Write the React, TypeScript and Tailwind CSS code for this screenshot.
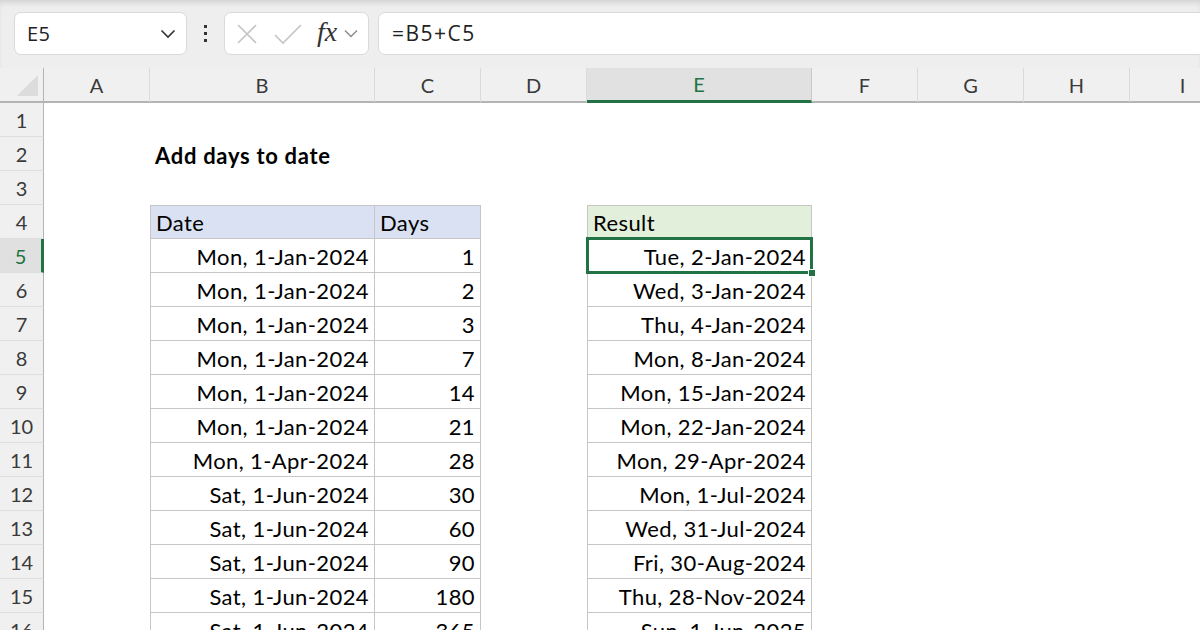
import React from "react";

const COLS = [
  { k: "A", w: 106 },
  { k: "B", w: 225 },
  { k: "C", w: 106 },
  { k: "D", w: 106 },
  { k: "E", w: 225 },
  { k: "F", w: 106 },
  { k: "G", w: 106 },
  { k: "H", w: 106 },
  { k: "I", w: 106 },
];

const DATA: [string, string, string][] = [
  ["Mon, 1-Jan-2024", "1", "Tue, 2-Jan-2024"],
  ["Mon, 1-Jan-2024", "2", "Wed, 3-Jan-2024"],
  ["Mon, 1-Jan-2024", "3", "Thu, 4-Jan-2024"],
  ["Mon, 1-Jan-2024", "7", "Mon, 8-Jan-2024"],
  ["Mon, 1-Jan-2024", "14", "Mon, 15-Jan-2024"],
  ["Mon, 1-Jan-2024", "21", "Mon, 22-Jan-2024"],
  ["Mon, 1-Apr-2024", "28", "Mon, 29-Apr-2024"],
  ["Sat, 1-Jun-2024", "30", "Mon, 1-Jul-2024"],
  ["Sat, 1-Jun-2024", "60", "Wed, 31-Jul-2024"],
  ["Sat, 1-Jun-2024", "90", "Fri, 30-Aug-2024"],
  ["Sat, 1-Jun-2024", "180", "Thu, 28-Nov-2024"],
  ["Sat, 1-Jun-2024", "365", "Sun, 1-Jun-2025"],
];

const cellFont = "font-['Lato','Liberation_Sans',sans-serif] text-[22px] leading-[28px] tracking-[0.4px] text-black";

function RowHeader({ n }: { n: number }) {
  const sel = n === 5;
  return (
    <div
      className={`h-[34px] flex items-center justify-center border-b border-[#dedede] font-['Lato','Liberation_Sans',sans-serif] text-[20px] ${
        sel
          ? "bg-[#e0e0e0] text-[#217346] border-r-[3px] border-r-[#217346]"
          : "bg-[#f0f0f0] text-[#3a3a3a] border-r border-r-[#b4b4b4]"
      }`}
    >
      {n}
    </div>
  );
}

function Cell({
  children,
  className = "",
}: {
  children?: React.ReactNode;
  className?: string;
}) {
  return (
    <div className={`h-[34px] flex items-end pb-[1px] px-[5px] whitespace-nowrap overflow-hidden ${cellFont} ${className}`}>
      {children}
    </div>
  );
}

export default function App() {
  const rows: React.ReactNode[] = [];
  for (let r = 1; r <= 16; r++) {
    const cells: React.ReactNode[] = [];
    cells.push(<RowHeader key="h" n={r} />);
    for (let c = 0; c < COLS.length; c++) {
      const col = COLS[c].k;
      let content: React.ReactNode = null;
      let cls = "";
      let extra: React.ReactNode = null;
      if (r === 2 && col === "B") {
        content = <span className="font-bold text-[22px] tracking-[0.7px]">Add days to date</span>;
        cls = "overflow-visible";
      }
      const inTable1 = r >= 4 && (col === "B" || col === "C");
      const inTable2 = r >= 4 && col === "E";
      if (inTable1 || inTable2) {
        cls += " border-r border-b border-[#c6c6c6]";
        if (col === "B" || col === "E") cls += " border-l";
        if (r === 4) cls += " border-t";
      }
      if (r === 4) {
        if (col === "B") { content = "Date"; cls += " bg-[#d9e1f2]"; }
        if (col === "C") { content = "Days"; cls += " bg-[#d9e1f2]"; }
        if (col === "E") { content = "Result"; cls += " bg-[#e2efda]"; }
      } else if (r >= 5) {
        const d = DATA[r - 5];
        if (col === "B") { content = d[0]; cls += " justify-end"; }
        if (col === "C") { content = d[1]; cls += " justify-end"; }
        if (col === "E") { content = d[2]; cls += " justify-end"; }
      }
      if (r === 5 && col === "E") {
        cls += " relative overflow-visible";
        extra = (
          <>
            <div className="absolute -left-[2px] -top-[2px] -right-[2px] -bottom-[2px] border-[3px] border-[#217346] pointer-events-none" />
            <div className="absolute -right-[5px] -bottom-[5px] w-[8px] h-[8px] bg-[#217346] border border-white" />
          </>
        );
      }
      cells.push(
        <Cell key={c} className={cls}>
          {content}
          {extra}
        </Cell>
      );
    }
    rows.push(<React.Fragment key={r}>{cells}</React.Fragment>);
  }

  return (
    <div className="w-[1200px] h-[630px] overflow-hidden bg-white flex flex-col">
      {/* Formula bar */}
      <div className="h-[68px] shrink-0 bg-[#eeeeee] shadow-[inset_0_5px_6px_-3px_rgba(0,0,0,0.14)] flex items-start pt-[12px] pl-[14px]">
        <div className="w-[173px] h-[43px] bg-white rounded-[7px] border border-[#dadada] flex items-center pl-[12px] pr-[10px] justify-between">
          <span className="font-['Open_Sans','Lato',sans-serif] text-[20px] tracking-[0.5px] text-[#222]">E5</span>
          <svg width="16" height="10" viewBox="0 0 16 10">
            <path d="M1.5 1.5 L8 8 L14.5 1.5" fill="none" stroke="#333" strokeWidth="1.6" />
          </svg>
        </div>
        <div className="w-[37px] h-[43px] flex flex-col items-center justify-center gap-[4px]">
          <div className="w-[3px] h-[3px] bg-[#333]" />
          <div className="w-[3px] h-[3px] bg-[#333]" />
          <div className="w-[3px] h-[3px] bg-[#333]" />
        </div>
        <div className="w-[145px] h-[43px] bg-white rounded-[7px] border border-[#dadada] flex items-center pl-[10px]">
          <svg width="22" height="22" viewBox="0 0 22 22" className="ml-[1px]">
            <path d="M2 2 L20 20 M20 2 L2 20" fill="none" stroke="#c4c4c4" strokeWidth="1.6" />
          </svg>
          <svg width="30" height="22" viewBox="0 0 30 22" className="ml-[15px]">
            <path d="M2 12 L10 20 L28 2" fill="none" stroke="#c4c4c4" strokeWidth="1.6" />
          </svg>
          <span className="ml-[14px] font-['Liberation_Serif',serif] italic text-[28px] text-[#333] leading-none -mt-[4px]">
            fx
          </span>
          <svg width="14" height="9" viewBox="0 0 14 9" className="ml-[7px]">
            <path d="M1 1.5 L7 7.5 L13 1.5" fill="none" stroke="#8a8a8a" strokeWidth="1.4" />
          </svg>
        </div>
        <div className="ml-[9px] flex-1 -mr-[20px] h-[43px] bg-white rounded-[7px] border border-[#dadada] flex items-center pl-[13px]">
          <span className="font-['Open_Sans','Lato',sans-serif] text-[21px] tracking-[1.5px] text-[#222]">=B5+C5</span>
        </div>
      </div>

      {/* Column headers */}
      <div className="flex h-[35px] shrink-0 bg-[#f0f0f0]">
        <div className="w-[44px] shrink-0 h-[35px] border-b-2 border-[#b4b4b4] border-r border-r-[#b4b4b4] relative">
          <svg width="22" height="22" viewBox="0 0 22 22" className="absolute left-[17px] top-[7px]">
            <path d="M21 0 L21 21 L0 21 Z" fill="#dcdcdc" />
          </svg>
        </div>
        {COLS.map((c) =>
          c.k === "E" ? (
            <div
              key={c.k}
              style={{ width: c.w }}
              className="shrink-0 h-[35px] bg-[#e1e1e1] border-r border-[#c8c8c8] border-b-[3px] border-b-[#217346] flex items-center justify-center font-['Lato','Liberation_Sans',sans-serif] text-[20px] text-[#217346]"
            >
              {c.k}
            </div>
          ) : (
            <div
              key={c.k}
              style={{ width: c.w }}
              className="shrink-0 h-[35px] border-r border-[#dadada] border-b-2 border-b-[#b4b4b4] flex items-center justify-center font-['Lato','Liberation_Sans',sans-serif] text-[20px] text-[#3a3a3a]"
            >
              {c.k}
            </div>
          )
        )}
      </div>

      {/* Sheet grid */}
      <div className="grid grid-cols-[44px_106px_225px_106px_106px_225px_106px_106px_106px_106px] auto-rows-[34px] w-[1242px]">
        {rows}
      </div>
    </div>
  );
}
